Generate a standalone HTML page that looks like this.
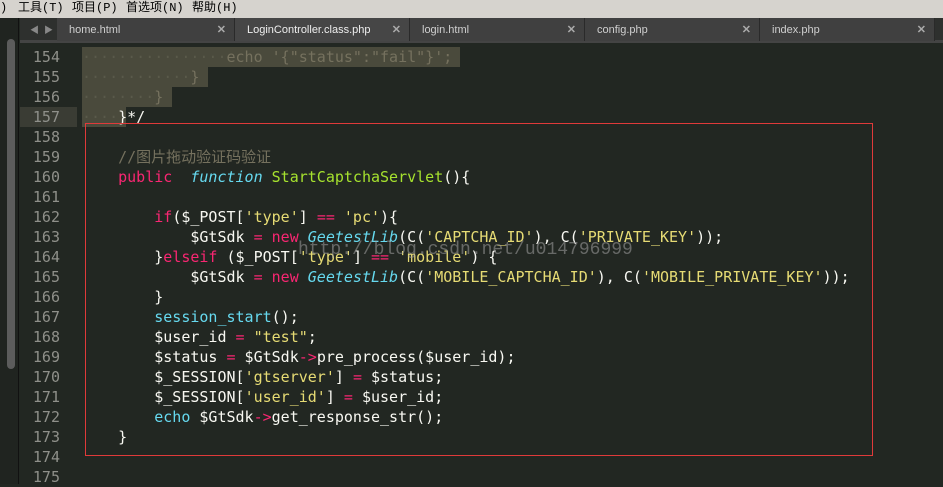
<!DOCTYPE html>
<html><head><meta charset="utf-8"><style>
*{margin:0;padding:0;box-sizing:border-box}
body{width:943px;height:484px;overflow:hidden;background:#222722;position:relative;font-family:"Liberation Sans","Noto Sans CJK SC",sans-serif}
.menu{position:absolute;left:0;top:0;width:943px;height:18px;background:#d6d3ce;font-size:12px;color:#000;line-height:17px;font-family:"Liberation Mono","Noto Sans CJK SC",monospace}
.menu span{position:absolute;top:0}
.side{position:absolute;left:0;top:18px;width:19px;height:466px;background:#202420;border-right:1px solid #111}
.sb{position:absolute;left:7px;top:21px;width:8px;height:330px;background:#5c5c5c;border-radius:4px}
.tabbar{position:absolute;left:20px;top:18px;width:923px;height:25px;background:#2e302e;border-bottom:3px solid #444}
.tab{position:absolute;top:0;height:23px;background:#404040;border-right:1px solid #2a2a2a;color:#cfcfcf;font-size:11px;line-height:24px;padding-left:12px}
.tab.act{background:#464646;color:#eee}
.tab i{position:absolute;right:8px;top:0;font-style:normal;color:#aaa;font-size:11px;font-weight:bold}
.arr{position:absolute;top:5px;color:#888;font-size:9px}
.ln{position:absolute;left:20px;width:40px;text-align:right;color:#8f908a;font:15px/20px "DejaVu Sans Mono",monospace}
.code{position:absolute;left:82px;font:15px/20px "DejaVu Sans Mono","Noto Sans CJK SC",monospace;color:#f8f8f2;white-space:pre}
.sel{position:absolute;background:#4a4a3c}
.c{color:#75715e}.k{color:#f92672}.f{color:#66d9ef;font-style:italic}.g{color:#a6e22e}.s{color:#e6db74}.b{color:#66d9ef}.d{color:#5a5a4a}
.box{position:absolute;left:85px;top:123px;width:788px;height:333px;border:1px solid #e03a3a}
.wm{position:absolute;left:298px;top:240px;font:18px "Liberation Mono",monospace;color:rgba(160,160,160,.55)}
</style></head><body>
<div class="menu"><span style="left:0">)</span><span style="left:18px">工具(T)</span><span style="left:72px">项目(P)</span><span style="left:126px">首选项(N)</span><span style="left:192px">帮助(H)</span></div>
<div class="side"><div class="sb"></div></div>
<div class="tabbar">
<span class="arr" style="left:10px">◀</span><span class="arr" style="left:24px">▶</span>
<div class="tab" style="left:37px;width:178px">home.html<i>✕</i></div>
<div class="tab act" style="left:215px;width:175px">LoginController.class.php<i>✕</i></div>
<div class="tab" style="left:390px;width:175px">login.html<i>✕</i></div>
<div class="tab" style="left:565px;width:175px">config.php<i>✕</i></div>
<div class="tab" style="left:740px;width:175px">index.php<i>✕</i></div>
</div>
<div class="sel" style="left:20px;top:107px;width:57px;height:20px;background:#3a3c34"></div>
<div class="sel" style="left:82px;top:47px;width:378px;height:20px"></div>
<div class="sel" style="left:82px;top:67px;width:126px;height:20px"></div>
<div class="sel" style="left:82px;top:87px;width:90px;height:20px"></div>
<div class="sel" style="left:82px;top:107px;width:44px;height:20px"></div>

<div class="ln" style="top:47px">154<br>155<br>156<br>157<br>158<br>159<br>160<br>161<br>162<br>163<br>164<br>165<br>166<br>167<br>168<br>169<br>170<br>171<br>172<br>173<br>174<br>175</div>

<div class="code" style="top:47px"><span class="d">················</span><span class="c">echo '{"status":"fail"}';</span>
<span class="d">············</span><span class="c">}</span>
<span class="d">········</span><span class="c">}</span>
<span class="d">····</span>}*/

    <span class="c">//图片拖动验证码验证</span>
    <span class="k">public</span>  <span class="f">function</span> <span class="g">StartCaptchaServlet</span>(){

        <span class="k">if</span>($_POST[<span class="s">'type'</span>] <span class="k">==</span> <span class="s">'pc'</span>){
            $GtSdk <span class="k">=</span> <span class="k">new</span> <span class="f">GeetestLib</span>(C(<span class="s">'CAPTCHA_ID'</span>), C(<span class="s">'PRIVATE_KEY'</span>));
        }<span class="k">elseif</span> ($_POST[<span class="s">'type'</span>] <span class="k">==</span> <span class="s">'mobile'</span>) {
            $GtSdk <span class="k">=</span> <span class="k">new</span> <span class="f">GeetestLib</span>(C(<span class="s">'MOBILE_CAPTCHA_ID'</span>), C(<span class="s">'MOBILE_PRIVATE_KEY'</span>));
        }
        <span class="b">session_start</span>();
        $user_id <span class="k">=</span> <span class="s">"test"</span>;
        $status <span class="k">=</span> $GtSdk<span class="k">-&gt;</span>pre_process($user_id);
        $_SESSION[<span class="s">'gtserver'</span>] <span class="k">=</span> $status;
        $_SESSION[<span class="s">'user_id'</span>] <span class="k">=</span> $user_id;
        <span class="b">echo</span> $GtSdk<span class="k">-&gt;</span>get_response_str();
    }</div>
<div class="box"></div>
<div class="wm">http://blog.csdn.net/u014796999</div>
</body></html>
